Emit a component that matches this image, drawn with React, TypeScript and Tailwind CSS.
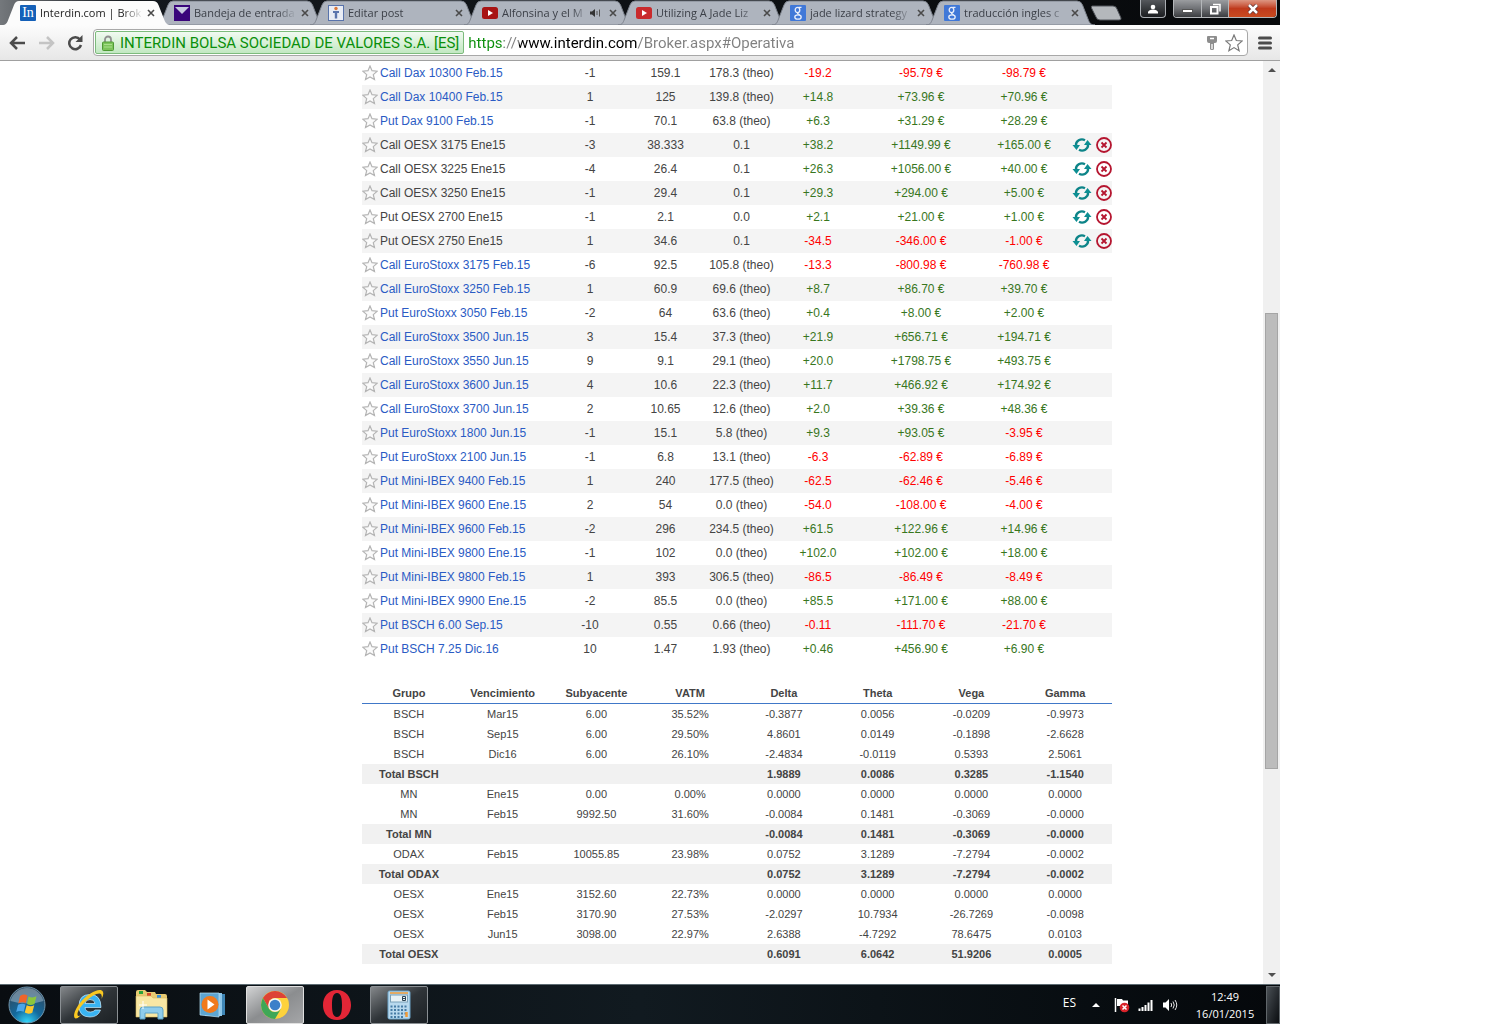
import { ReactNode } from "react";
import clsx from "clsx";

type Position = {
  name: string;
  qty: string;
  price: string;
  last: string;
  diff: string;
  total: string;
  day: string;
  expired?: boolean;
};

const row = (
  name: string,
  qty: string,
  price: string,
  last: string,
  diff: string,
  total: string,
  day: string,
  expired = false
): Position => ({ name, qty, price, last, diff, total, day, expired });

const positions: Position[] = [
  row("Call Dax 10300 Feb.15", "-1", "159.1", "178.3 (theo)", "-19.2", "-95.79 €", "-98.79 €"),
  row("Call Dax 10400 Feb.15", "1", "125", "139.8 (theo)", "+14.8", "+73.96 €", "+70.96 €"),
  row("Put Dax 9100 Feb.15", "-1", "70.1", "63.8 (theo)", "+6.3", "+31.29 €", "+28.29 €"),
  row("Call OESX 3175 Ene15", "-3", "38.333", "0.1", "+38.2", "+1149.99 €", "+165.00 €", true),
  row("Call OESX 3225 Ene15", "-4", "26.4", "0.1", "+26.3", "+1056.00 €", "+40.00 €", true),
  row("Call OESX 3250 Ene15", "-1", "29.4", "0.1", "+29.3", "+294.00 €", "+5.00 €", true),
  row("Put OESX 2700 Ene15", "-1", "2.1", "0.0", "+2.1", "+21.00 €", "+1.00 €", true),
  row("Put OESX 2750 Ene15", "1", "34.6", "0.1", "-34.5", "-346.00 €", "-1.00 €", true),
  row("Call EuroStoxx 3175 Feb.15", "-6", "92.5", "105.8 (theo)", "-13.3", "-800.98 €", "-760.98 €"),
  row("Call EuroStoxx 3250 Feb.15", "1", "60.9", "69.6 (theo)", "+8.7", "+86.70 €", "+39.70 €"),
  row("Put EuroStoxx 3050 Feb.15", "-2", "64", "63.6 (theo)", "+0.4", "+8.00 €", "+2.00 €"),
  row("Call EuroStoxx 3500 Jun.15", "3", "15.4", "37.3 (theo)", "+21.9", "+656.71 €", "+194.71 €"),
  row("Call EuroStoxx 3550 Jun.15", "9", "9.1", "29.1 (theo)", "+20.0", "+1798.75 €", "+493.75 €"),
  row("Call EuroStoxx 3600 Jun.15", "4", "10.6", "22.3 (theo)", "+11.7", "+466.92 €", "+174.92 €"),
  row("Call EuroStoxx 3700 Jun.15", "2", "10.65", "12.6 (theo)", "+2.0", "+39.36 €", "+48.36 €"),
  row("Put EuroStoxx 1800 Jun.15", "-1", "15.1", "5.8 (theo)", "+9.3", "+93.05 €", "-3.95 €"),
  row("Put EuroStoxx 2100 Jun.15", "-1", "6.8", "13.1 (theo)", "-6.3", "-62.89 €", "-6.89 €"),
  row("Put Mini-IBEX 9400 Feb.15", "1", "240", "177.5 (theo)", "-62.5", "-62.46 €", "-5.46 €"),
  row("Put Mini-IBEX 9600 Ene.15", "2", "54", "0.0 (theo)", "-54.0", "-108.00 €", "-4.00 €"),
  row("Put Mini-IBEX 9600 Feb.15", "-2", "296", "234.5 (theo)", "+61.5", "+122.96 €", "+14.96 €"),
  row("Put Mini-IBEX 9800 Ene.15", "-1", "102", "0.0 (theo)", "+102.0", "+102.00 €", "+18.00 €"),
  row("Put Mini-IBEX 9800 Feb.15", "1", "393", "306.5 (theo)", "-86.5", "-86.49 €", "-8.49 €"),
  row("Put Mini-IBEX 9900 Ene.15", "-2", "85.5", "0.0 (theo)", "+85.5", "+171.00 €", "+88.00 €"),
  row("Put BSCH 6.00 Sep.15", "-10", "0.55", "0.66 (theo)", "-0.11", "-111.70 €", "-21.70 €"),
  row("Put BSCH 7.25 Dic.16", "10", "1.47", "1.93 (theo)", "+0.46", "+456.90 €", "+6.90 €"),
];

const greekColumns = ["Grupo", "Vencimiento", "Subyacente", "VATM", "Delta", "Theta", "Vega", "Gamma"];

const greeks: string[][] = [
  ["BSCH", "Mar15", "6.00", "35.52%", "-0.3877", "0.0056", "-0.0209", "-0.9973"],
  ["BSCH", "Sep15", "6.00", "29.50%", "4.8601", "0.0149", "-0.1898", "-2.6628"],
  ["BSCH", "Dic16", "6.00", "26.10%", "-2.4834", "-0.0119", "0.5393", "2.5061"],
  ["Total BSCH", "", "", "", "1.9889", "0.0086", "0.3285", "-1.1540"],
  ["MN", "Ene15", "0.00", "0.00%", "0.0000", "0.0000", "0.0000", "0.0000"],
  ["MN", "Feb15", "9992.50", "31.60%", "-0.0084", "0.1481", "-0.3069", "-0.0000"],
  ["Total MN", "", "", "", "-0.0084", "0.1481", "-0.3069", "-0.0000"],
  ["ODAX", "Feb15", "10055.85", "23.98%", "0.0752", "3.1289", "-7.2794", "-0.0002"],
  ["Total ODAX", "", "", "", "0.0752", "3.1289", "-7.2794", "-0.0002"],
  ["OESX", "Ene15", "3152.60", "22.73%", "0.0000", "0.0000", "0.0000", "0.0000"],
  ["OESX", "Feb15", "3170.90", "27.53%", "-2.0297", "10.7934", "-26.7269", "-0.0098"],
  ["OESX", "Jun15", "3098.00", "22.97%", "2.6388", "-4.7292", "78.6475", "0.0103"],
  ["Total OESX", "", "", "", "0.6091", "6.0642", "51.9206", "0.0005"],
];

/* ---------- favicons ---------- */

const InterdinIcon = () => (
  <span className="flex size-4 shrink-0 items-center justify-center rounded-[1px] bg-[#1460b8] font-['Liberation_Serif',serif] text-[14px] leading-4 text-white">
    In
  </span>
);

const MailIcon = () => (
  <svg viewBox="0 0 16 16" className="size-4 shrink-0">
    <rect width="16" height="16" fill="#3a067b" />
    <path d="M1 2h14L8 9z" fill="#c8cbe0" />
  </svg>
);

const PostIcon = () => (
  <svg viewBox="0 0 16 16" className="size-4 shrink-0">
    <rect x=".5" y=".5" width="15" height="15" fill="#e9edf5" stroke="#5873ab" />
    <circle cx="8" cy="3.5" r="1.7" fill="#d9763a" />
    <path d="M5 6h6v2H9.200v5.500H6.800V8H5z" fill="#5b75ad" />
  </svg>
);

const YoutubeIcon = ({ color }: { color: string }) => (
  <svg viewBox="0 0 16 16" className="size-4 shrink-0">
    <rect y="2" width="16" height="12" rx="2.500" fill={color} />
    <path d="M6 5l5 3-5 3z" fill="#fff" />
  </svg>
);

const GoogleIcon = () => (
  <svg viewBox="0 0 16 16" className="size-4 shrink-0">
    <rect width="16" height="16" rx="1" fill="#4078d8" />
    <g fill="none" stroke="#e8eefb" strokeWidth="1.300">
      <ellipse cx="7.500" cy="5" rx="2.300" ry="2.600" />
      <ellipse cx="8" cy="12" rx="3.200" ry="2.200" />
      <path d="M8.500 2.300h3M8 7.500c-1.500 1 1 1.500 1.500 2.500" />
    </g>
  </svg>
);

type TabInfo = { title: string; icon: ReactNode; active?: boolean; audio?: boolean };

const tabs: TabInfo[] = [
  { title: "Interdin.com | Brok", icon: <InterdinIcon />, active: true },
  { title: "Bandeja de entrada", icon: <MailIcon /> },
  { title: "Editar post", icon: <PostIcon /> },
  { title: "Alfonsina y el M", icon: <YoutubeIcon color="#a81414" />, audio: true },
  { title: "Utilizing A Jade Liz", icon: <YoutubeIcon color="#c92a2c" /> },
  { title: "jade lizard strategy", icon: <GoogleIcon /> },
  { title: "traducción ingles c", icon: <GoogleIcon /> },
];

const Tab = ({ title, icon, active, audio }: TabInfo) => (
  <div className={clsx("relative h-[25px] max-w-[154px] min-w-0 flex-1", active && "z-10")}>
    <svg viewBox="0 0 170 25" className="absolute left-0 top-0 h-[25px] w-[170px]">
      <path
        d="M0 25C4 25 5 23 6.500 19L12 5Q13.500 1 17 1H151Q155 1 156.500 5L162 19C163.500 23 165 25 169 25Z"
        fill={active ? "#fcfcfc" : "#aeb4be"}
        stroke={active ? "none" : "#7c828c"}
      />
    </svg>
    <div className="relative flex h-full items-center pr-px pl-[18px]">
      {icon}
      <span
        className={clsx(
          "ml-1 min-w-0 flex-1 overflow-hidden whitespace-nowrap text-[11px] leading-4 [mask-image:linear-gradient(to_right,black_80%,transparent)]",
          active ? "text-[#222]" : "text-[#3c4048]"
        )}
      >
        {title}
      </span>
      {audio && (
        <svg viewBox="0 0 12 10" className="h-2.5 w-3 shrink-0">
          <path d="M1 3.500h2L6 1v8L3 6.500H1z" fill="#333" />
          <path d="M8 3v4M10.500 1.500v7" stroke="#555" />
        </svg>
      )}
      <button aria-label="Cerrar pestaña" className={clsx("shrink-0", audio ? "ml-2" : "ml-1")}>
        <svg viewBox="0 0 8 8" className="size-2">
          <path d="M1 1l6 6M7 1l-6 6" stroke="#4a4a4a" strokeWidth="1.600" />
        </svg>
      </button>
    </div>
  </div>
);

const WindowControls = () => (
  <div className="ml-auto flex items-start pr-[3px]">
    <button aria-label="Usuario" className="flex h-[18px] w-[26px] items-center justify-center rounded-b border border-t-0 border-[#a9adb2] bg-linear-to-b from-[#55585c] to-[#1b1d20]">
      <svg viewBox="0 0 10 10" className="size-2.5">
        <circle cx="5" cy="3" r="2.300" fill="#fff" />
        <path d="M0 9.500V8q1-2.500 5-2.500T10 8v1.500z" fill="#fff" />
      </svg>
    </button>
    <div className="ml-[7px] flex h-[18px] overflow-hidden rounded-b border border-t-0 border-[#b4b7ba]">
      <button aria-label="Minimizar" className="flex w-[28px] items-center justify-center border-r border-[#b4b7ba] bg-linear-to-b from-[#9b9da0] via-[#707276] to-[#3b3d40]">
        <span className="mt-1 h-1 w-[11px] border border-[#555] bg-white" />
      </button>
      <button aria-label="Restaurar" className="flex w-[27px] items-center justify-center border-r border-[#b4b7ba] bg-linear-to-b from-[#9b9da0] via-[#707276] to-[#3b3d40]">
        <svg viewBox="0 0 12 12" className="size-3">
          <path d="M4 1.500h7v7" fill="none" stroke="#fff" strokeWidth="1.500" />
          <rect x="2" y="4" width="6.500" height="6.500" fill="none" stroke="#fff" strokeWidth="2" />
        </svg>
      </button>
      <button aria-label="Cerrar" className="flex w-[47px] items-center justify-center bg-linear-to-b from-[#dc9682] via-[#bf3a1c] to-[#c84a20]">
        <svg viewBox="0 0 12 10" className="h-2.5 w-3">
          <path d="M2 1l8 8M10 1L2 9" stroke="#5c3030" strokeWidth="4" />
          <path d="M2 1l8 8M10 1L2 9" stroke="#fff" strokeWidth="2.500" />
        </svg>
      </button>
    </div>
  </div>
);

const TabStrip = () => (
  <div className="flex h-[25px] bg-linear-to-r from-[#74787c] via-[#14181d] via-10% to-[#07090b]">
    <div className="flex min-w-0 flex-1 pl-0.5">
      {tabs.map((tab) => (
        <Tab key={tab.title} {...tab} />
      ))}
      <button aria-label="Nueva pestaña" className="ml-2.5 h-[25px] w-8 shrink-0">
        <svg viewBox="0 0 32 25" className="h-[25px] w-8">
          <path d="M2 6h21q3 0 4 3l4 9q.5 2-2 2H10q-3 0-4-3L1.500 8Q1 6 2 6z" fill="#b4b8bc" stroke="#50545a" />
        </svg>
      </button>
    </div>
    <WindowControls />
  </div>
);

const Toolbar = () => (
  <div className="flex h-9 items-center border-b border-[#a0a0a0] bg-linear-to-b from-[#fcfcfc] to-[#e7e7e7] pr-2 pl-[9px]">
    <button aria-label="Atrás">
      <svg viewBox="0 0 16 14" className="h-3.5 w-4" fill="none" stroke="#4b4b4b" strokeWidth="2.500">
        <path d="M16 7H2M8 1L2 7l6 6" />
      </svg>
    </button>
    <button aria-label="Adelante" className="ml-3.5">
      <svg viewBox="0 0 16 14" className="h-3.5 w-4" fill="none" stroke="#c4c4c4" strokeWidth="2.500">
        <path d="M0 7h14M8 1l6 6-6 6" />
      </svg>
    </button>
    <button aria-label="Volver a cargar" className="ml-3">
      <svg viewBox="0 0 16 16" className="size-4">
        <path d="M13 4.500A6 6 0 1 0 14 10" fill="none" stroke="#4b4b4b" strokeWidth="2.500" />
        <path d="M15.500 0v7h-7z" fill="#4b4b4b" />
      </svg>
    </button>
    <div className="ml-2.5 flex h-[27px] min-w-0 flex-1 items-center rounded-sm border border-[#a8a8a8] bg-white pr-1 pl-px font-['Roboto',sans-serif] text-[15px] leading-5">
      <span className="flex h-[23px] shrink-0 items-center gap-1.5 rounded-xs border border-[#7dbb7d] bg-linear-to-b from-[#f1faf1] to-[#c2e8c2] pr-1 pl-1.5 whitespace-nowrap text-[#0b8f0b]">
        <svg viewBox="0 0 12 16" className="h-4 w-3">
          <path d="M3 8V4.500a3 3 0 0 1 6 0V8" fill="none" stroke="#909090" strokeWidth="1.800" />
          <rect x=".5" y="7" width="11" height="8.500" rx="1" fill="#7cc45a" stroke="#4e9a35" />
          <path d="M2 9.500h8M2 12h8" stroke="#a9df8c" />
        </svg>
        INTERDIN BOLSA SOCIEDAD DE VALORES S.A. [ES]
      </span>
      <input
        type="text"
        aria-label="Dirección"
        defaultValue="https://www.interdin.com/Broker.aspx#Operativa"
        className="ml-1 h-[23px] min-w-0 flex-1 bg-[linear-gradient(to_right,#0b8f0b_36px,#808080_36px,#808080_51px,#000_51px,#000_169px,#808080_169px)] bg-clip-text text-transparent outline-none"
      />
      <svg viewBox="0 0 10 16" className="h-4 w-2.5 shrink-0">
        <path d="M1 1h8q1 0 1 1v4q0 2-2 2H7v6q0 1-2 1t-2-1V8H2Q0 8 0 6V2q0-1 1-1z" fill="#8d8d8d" />
        <path d="M3 3.500h4M5 9v5" stroke="#fff" strokeWidth="1.300" />
      </svg>
      <button aria-label="Añadir a marcadores" className="ml-2">
        <svg viewBox="0 0 18 18" className="size-[18px]">
          <path d="M9 1l2.300 5.500 5.900.5-4.500 3.900 1.400 5.800L9 13.600l-5.100 3.100 1.400-5.800L.8 7l5.900-.5z" fill="#fff" stroke="#787878" strokeWidth="1.200" />
        </svg>
      </button>
    </div>
    <button aria-label="Menú" className="ml-2.5">
      <svg viewBox="0 0 14 14" className="size-3.5">
        <path d="M1.500 2h11M1.500 7h11M1.500 12h11" stroke="#4b4b4b" strokeWidth="3" strokeLinecap="round" />
      </svg>
    </button>
  </div>
);

/* ---------- page ---------- */

const Star = () => (
  <svg viewBox="0 0 16 16" className="size-4">
    <path d="M8 1l2 4.700 5.200.5-3.900 3.400 1.200 5L8 12l-4.500 2.600 1.200-5L.8 6.200 6 5.700z" fill="#fafafa" stroke="#b4b4b4" strokeWidth="1.200" />
  </svg>
);

const RollIcon = () => (
  <svg viewBox="0 0 20 16" className="h-4 w-5">
    <path d="M4 8.500A6 5.500 0 0 1 13 3.200M16 7.500A6 5.500 0 0 1 7 12.800" fill="none" stroke="#0d8488" strokeWidth="2.400" />
    <path d="M.5 8h7.500L4.500 13zM12 8h7.500L15.500 3z" fill="#0d8f93" />
  </svg>
);

const CloseIcon = () => (
  <svg viewBox="0 0 16 16" className="size-4" fill="none" stroke="#b5152f">
    <circle cx="8" cy="8" r="7" strokeWidth="1.800" />
    <path d="M5.500 5.500l5 5M10.500 5.500l-5 5" strokeWidth="1.800" />
  </svg>
);

const signColor = (value: string) => (value.startsWith("-") ? "text-[#ff0000]" : "text-[#38761d]");

const PositionsTable = () => (
  <table className="w-full table-fixed text-center text-[12px] leading-4 text-[#444]">
    <colgroup>
      <col />
      <col className="w-[76px]" />
      <col className="w-[75px]" />
      <col className="w-[77px]" />
      <col className="w-[76px]" />
      <col className="w-[130px]" />
      <col className="w-[76px]" />
      <col className="w-[50px]" />
    </colgroup>
    <tbody>
      {positions.map((p) => (
        <tr key={p.name} className="h-6 even:bg-[#f4f4f4]">
          <td>
            <div className="flex items-center gap-0.5 whitespace-nowrap">
              <button aria-label="Favorito" className="shrink-0">
                <Star />
              </button>
              {p.expired ? p.name : <a href="#Operativa" className="text-[#2a5bc4]">{p.name}</a>}
            </div>
          </td>
          <td>{p.qty}</td>
          <td>{p.price}</td>
          <td className="whitespace-nowrap">{p.last}</td>
          <td className={signColor(p.diff)}>{p.diff}</td>
          <td className={signColor(p.total)}>{p.total}</td>
          <td className={signColor(p.day)}>{p.day}</td>
          <td>
            {p.expired && (
              <div className="flex items-center justify-end gap-1">
                <button aria-label="Renovar"><RollIcon /></button>
                <button aria-label="Cerrar posición"><CloseIcon /></button>
              </div>
            )}
          </td>
        </tr>
      ))}
    </tbody>
  </table>
);

const GreeksTable = () => (
  <table className="mt-[22px] w-full table-fixed border-separate border-spacing-0 text-center text-[11px] leading-4 text-[#444]">
    <thead>
      <tr className="h-[21px]">
        {greekColumns.map((c) => (
          <th key={c} className="border-b border-[#4078c8]">{c}</th>
        ))}
      </tr>
    </thead>
    <tbody>
      {greeks.map((cells, i) => (
        <tr key={i} className={clsx("h-5", cells[0].startsWith("Total") && "bg-[#f1f1f1] font-bold")}>
          {cells.map((cell, j) => (
            <td key={j}>{cell}</td>
          ))}
        </tr>
      ))}
    </tbody>
  </table>
);

const Scrollbar = () => (
  <div className="flex w-[17px] shrink-0 flex-col items-center bg-[#f0f0f0] py-[7px]">
    <svg viewBox="0 0 8 4" className="h-1 w-2"><path d="M0 4l4-4 4 4z" fill="#505050" /></svg>
    <div className="grow-[242]" />
    <div className="w-[13px] grow-[455] border border-[#a5a5a5] bg-[#bcbcbc]" />
    <div className="grow-[204]" />
    <svg viewBox="0 0 8 4" className="h-1 w-2"><path d="M0 0l4 4 4-4z" fill="#505050" /></svg>
  </div>
);

/* ---------- taskbar ---------- */

const WindowsOrb = () => (
  <svg viewBox="0 0 38 38" className="size-[38px]">
    <defs>
      <radialGradient id="orb" cx=".5" cy="1" r=".9">
        <stop offset="0" stopColor="#35dcff" />
        <stop offset=".45" stopColor="#136a9e" />
        <stop offset="1" stopColor="#2f4a60" />
      </radialGradient>
    </defs>
    <circle cx="19" cy="19" r="18" fill="url(#orb)" stroke="#6f94ab" />
    <path d="M2.500 15a17 17 0 0 1 33 0q-16 5-33 0z" fill="#b9cfdd" opacity=".45" />
    <path d="M12 10q4-2.500 7.500-.5L17.800 17q-4-1.500-7.500.5z" fill="#f0652a" />
    <path d="M20.500 10.500q4 2 8-.2L26.500 18q-4 2-7.500 0z" fill="#8cc63c" />
    <path d="M10 18.800q4-2 7.500-.3l-1.800 7.200q-4-1.700-7.500.3z" fill="#4aa6ea" />
    <path d="M18.700 19.300q4 2 7.500 0l-1.900 7.400q-4 2-7.500-.2z" fill="#fdc72f" />
  </svg>
);

const IeIcon = () => (
  <svg viewBox="0 0 32 32" className="size-8">
    <path d="M28 18.500H12q.5 4.500 5.500 4.500 3 0 4.500-2h5.500Q25 28 17 28 6 28 6 17 6 5.500 17 5.500T28 18.500zM12 14.500h10Q21.500 10.500 17 10.500T12 14.500z" fill="#39b3f2" stroke="#c9ecff" strokeWidth=".7" />
    <path d="M8 26C0 35-2 25 7 14 16 3 28-2 30 3q1 3-1.500 7 1-5-1.500-5.500C21 3 4 18 4.500 26q.5 2 3.500 0z" fill="#f9c822" />
  </svg>
);

const FolderIcon = () => (
  <svg viewBox="0 0 34 32" className="h-8 w-[34px]">
    <path d="M2 3q0-2 2-2h7l2 2h8l1 2h9q2 0 2 2v21H2z" fill="#e7ca72" />
    <path d="M5 2h4v3H5z" fill="#29a33a" />
    <path d="M13 4h4v3h-4z" fill="#d84a2e" />
    <path d="M23 6h4v3h-4z" fill="#3a8fd8" />
    <path d="M2 7h15l2 2h14v19H2z" fill="#f8e7a4" stroke="#d8b95c" strokeWidth=".6" />
    <path d="M6 30V21q0-3 3-3h17q3 0 3 3v9h-5v-6H11v6z" fill="#8fcdec" stroke="#5ba2c8" />
    <path d="M9 12v8M5 16h8" stroke="#fff" />
  </svg>
);

const PlayerIcon = () => (
  <svg viewBox="0 0 28 26" className="h-[26px] w-7">
    <path d="M10 2h16v21H10z" fill="#3f86b6" />
    <path d="M6 1h17v23H6z" fill="#8ec6e8" />
    <path d="M1 1h19v24L1 23z" fill="#5da5d2" stroke="#b9dff3" strokeWidth=".7" />
    <circle cx="11" cy="12.500" r="8.500" fill="#f07a1d" />
    <path d="M8.500 7.500l7 5-7 5z" fill="#fff" />
  </svg>
);

const ChromeIcon = () => (
  <svg viewBox="0 0 30 30" className="size-[30px]">
    <circle cx="15" cy="15" r="14" fill="#fdd23c" />
    <path d="M2.900 8A14 14 0 0 1 27.100 8H15a7 7 0 0 0-6.100 3.500L8.900 18.500z" fill="#dd4236" />
    <path d="M2.900 8A14 14 0 0 0 15 29l6.100-10.500A7 7 0 0 1 8.900 18.500z" fill="#3fa757" />
    <circle cx="15" cy="15" r="6.800" fill="#f4f4f4" />
    <circle cx="15" cy="15" r="5.300" fill="#3c7fc9" />
  </svg>
);

const OperaIcon = () => (
  <svg viewBox="0 0 28 30" className="h-[30px] w-7">
    <path fillRule="evenodd" d="M14 0C5 0 0 7 0 15s5 15 14 15 14-7 14-15S23 0 14 0zm0 3c4 0 5 5 5 12s-1 12-5 12-5-5-5-12 1-12 5-12z" fill="#e32636" />
  </svg>
);

const CalcIcon = () => (
  <svg viewBox="0 0 24 30" className="h-[30px] w-6">
    <rect x="1" y="1" width="22" height="28" rx="1.500" fill="#b8d9ee" stroke="#6da4c8" />
    <path d="M3 3h18" stroke="#f19a36" strokeWidth="1.500" />
    <rect x="3.500" y="5" width="17" height="7" fill="#e6f1f6" stroke="#79a0b8" />
    <path d="M15.500 6.500h3v4h-3zM15.500 8.500h3" fill="none" stroke="#2d4454" />
    <path d="M3.500 16.500h17M3.500 20h17M3.500 23.500h17M3.500 27h14" stroke="#447ba4" strokeWidth="2" strokeDasharray="2 1.500" />
    <path d="M19.500 22v5" stroke="#f19a36" strokeWidth="2.500" />
  </svg>
);

const apps: { name: string; icon: ReactNode; look?: "open" | "active" }[] = [
  { name: "Internet Explorer", icon: <IeIcon />, look: "open" },
  { name: "Explorador", icon: <FolderIcon /> },
  { name: "Reproductor", icon: <PlayerIcon /> },
  { name: "Chrome", icon: <ChromeIcon />, look: "active" },
  { name: "Opera", icon: <OperaIcon /> },
  { name: "Calculadora", icon: <CalcIcon />, look: "open" },
];

const Taskbar = () => (
  <footer className="flex h-10 items-center border-t border-[#5d6b72] bg-linear-to-r from-[#090d11] via-[#111a20] to-[#05080b] text-white">
    <button aria-label="Inicio" className="ml-2">
      <WindowsOrb />
    </button>
    <div className="ml-3.5 flex gap-1">
      {apps.map((app) => (
        <button
          key={app.name}
          aria-label={app.name}
          className={clsx(
            "flex h-[38px] w-[58px] items-center justify-center rounded-xs border",
            !app.look && "border-transparent",
            app.look === "open" && "border-[#8a8f93] bg-linear-to-br from-[#85888b] via-[#2f3438] to-[#1c2125]",
            app.look === "active" && "border-[#e0e0e0] bg-linear-to-br from-[#d2d3d4] via-[#8b8d8f] to-[#a5a6a8]"
          )}
        >
          {app.icon}
        </button>
      ))}
    </div>
    <div className="ml-auto flex h-full items-center">
      <span className="pb-1 text-[12px] leading-4">ES</span>
      <button aria-label="Mostrar iconos ocultos" className="ml-4">
        <svg viewBox="0 0 8 4" className="h-1 w-2"><path d="M0 4l4-4 4 4z" fill="#fff" /></svg>
      </button>
      <svg viewBox="0 0 16 16" className="ml-3.5 size-4">
        <path d="M1.500 1v14" stroke="#fff" strokeWidth="1.500" />
        <path d="M3 2h5l1 1.500h5V9H3z" fill="#fff" />
        <circle cx="10.500" cy="10.500" r="4.800" fill="#d8232a" />
        <path d="M8.500 8.500l4 4M12.500 8.500l-4 4" stroke="#fff" strokeWidth="1.500" />
      </svg>
      <svg viewBox="0 0 16 12" className="ml-2 h-3 w-4">
        <path d="M1.500 12V9.500M4.500 12V8M7.500 12V6M10.500 12V3.500M13.500 12V1" stroke="#fff" strokeWidth="2" />
      </svg>
      <svg viewBox="0 0 16 14" className="ml-2 h-3.5 w-4">
        <path d="M1 4.500h2.500L7 1v12L3.500 9.500H1z" fill="#fff" />
        <path d="M9 5q1.300 2 0 4M11 3.500q2.500 3.500 0 7M13 2q3.500 5 0 10" fill="none" stroke="#e8e8e8" />
      </svg>
      <div className="ml-4 w-[62px] text-center text-[11px] leading-[17px] whitespace-nowrap">
        <div>12:49</div>
        <div>16/01/2015</div>
      </div>
      <button aria-label="Mostrar escritorio" className="ml-2.5 h-[38px] w-3.5 border border-[#60666a] bg-linear-to-br from-[#4a5055] to-[#0b0e11]" />
    </div>
  </footer>
);

const App = () => {
  return (
    <div className="min-h-screen bg-white pr-[220px] font-['Open_Sans','Noto_Sans',sans-serif]">
      <div className="flex min-h-screen flex-col">
        <header>
          <TabStrip />
          <Toolbar />
        </header>
        <div className="flex flex-1">
          <main className="min-w-0 flex-1 pr-[151px] pb-5 pl-[362px] font-['Liberation_Sans',Arial,sans-serif]">
            <PositionsTable />
            <GreeksTable />
          </main>
          <Scrollbar />
        </div>
        <Taskbar />
      </div>
    </div>
  );
};

export default App;
